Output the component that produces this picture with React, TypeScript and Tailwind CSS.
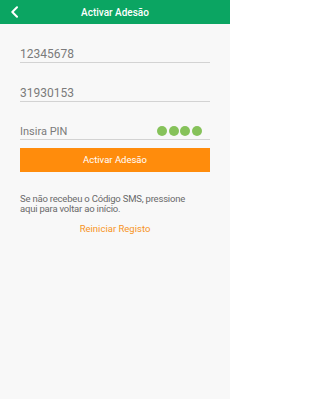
import React from 'react';

const font = { fontFamily: 'Roboto, "Liberation Sans", Arial, sans-serif' };

const Field: React.FC<{ value: string; className?: string }> = ({ value, className = '' }) => (
  <div className={`h-[16px] border-b border-[#d3d3d3] flex items-end ${className}`}>
    <span className="text-[12px] leading-[15px] text-[#7b7b7b]">{value}</span>
  </div>
);

export default function App() {
  return (
    <div className="w-[230px] h-[399px] bg-[#f8f8f8] flex flex-col" style={font}>
      <header className="h-6 bg-[#0ba562] flex items-center relative">
        <button type="button" className="absolute left-[10px] top-[6px] w-[10px] h-[12px]" aria-label="Voltar">
          <svg viewBox="0 0 10 12" className="w-[10px] h-[12px]" fill="none">
            <polyline points="7,1.2 2.3,6 7,10.8" stroke="#ffffff" strokeWidth="2" strokeLinecap="round" strokeLinejoin="round" />
          </svg>
        </button>
        <h1 className="flex-1 text-center text-white text-[10px] font-medium">Activar Adesão</h1>
      </header>

      <main className="px-5 pt-[23px] flex flex-col">
        <Field value="12345678" />
        <Field value="31930153" className="mt-[22.6px]" />
        <div className="mt-[22.6px] h-[16px] border-b border-[#d3d3d3] flex items-end justify-between">
          <span className="text-[11px] leading-[15px] text-[#7b7b7b]">Insira PIN</span>
          <div className="flex gap-[1.7px] pr-2 mb-[3px]">
            <span className="w-[10px] h-[10px] rounded-full bg-[#86c25a]" />
            <span className="w-[10px] h-[10px] rounded-full bg-[#86c25a]" />
            <span className="w-[10px] h-[10px] rounded-full bg-[#86c25a]" />
            <span className="w-[10px] h-[10px] rounded-full bg-[#86c25a]" />
          </div>
        </div>

        <button
          type="button"
          className="mt-2 h-6 w-full bg-[#ff8c0c] text-white text-[9.5px] flex items-center justify-center"
        >
          Activar Adesão
        </button>

        <p className="mt-[22px] text-[9.5px] leading-[10px] tracking-[-0.2px] text-[#6a6a6a] whitespace-nowrap">
          Se não recebeu o Código SMS, pressione
          <br />
          aqui para voltar ao início.
        </p>

        <button type="button" className="mt-[9px] text-[9.5px] leading-[12px] text-[#f7941e] self-center">
          Reiniciar Registo
        </button>
      </main>
    </div>
  );
}
